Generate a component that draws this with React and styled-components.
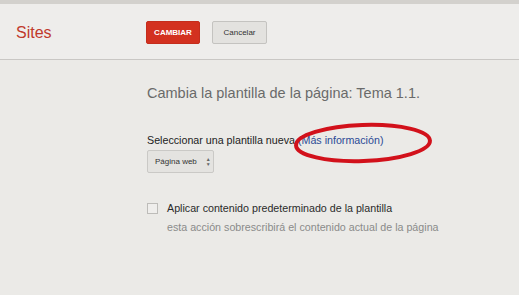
import React from "react";
import styled, { createGlobalStyle } from "styled-components";

const Global = createGlobalStyle`
  html, body {
    margin: 0;
    padding: 0;
    background: #ebeae7;
    font-family: "Liberation Sans", Arial, sans-serif;
  }
`;

const Page = styled.div`
  width: 519px;
  height: 295px;
  background: #ebeae7;
  overflow: hidden;
`;

const TopStrip = styled.div`
  height: 4px;
  background: #d3d1cd;
`;

const Header = styled.header`
  height: 55px;
  display: flex;
  align-items: center;
  background: #eeedeb;
  border-bottom: 1px solid #c9c7c4;
  padding-left: 16px;
`;

const Logo = styled.div`
  width: 130px;
  font-size: 16px;
  color: #c0392b;
  margin-top: 2px;
`;

const Button = styled.button`
  height: 23px;
  width: ${(p) => (p.$primary ? "54px" : "55px")};
  padding: 0;
  margin-right: 12px;
  margin-top: 2px;
  border-radius: 2px;
  font-family: "Liberation Sans", Arial, sans-serif;
  font-size: 8px;
  font-weight: ${(p) => (p.$primary ? "bold" : "normal")};
  color: ${(p) => (p.$primary ? "#fff" : "#333")};
  background: ${(p) => (p.$primary ? "#d3311f" : "#e3e2df")};
  border: 1px solid ${(p) => (p.$primary ? "#c42d1c" : "#c4c3c0")};
`;

const Main = styled.main`
  padding: 24px 0 0 147px;
`;

const Title = styled.h1`
  margin: 0;
  font-size: 14.5px;
  font-weight: normal;
  color: #6a6a6a;
  line-height: 18px;
`;

const Row = styled.div`
  position: relative;
  margin-top: 32px;
  font-size: 10.7px;
  color: #222;
  line-height: 13px;
`;

const Link = styled.a`
  color: #2b4a96;
  text-decoration: none;
`;

const Circle = styled.svg`
  position: absolute;
  left: 144px;
  top: -15px;
  pointer-events: none;
`;

const Select = styled.div`
  display: inline-flex;
  align-items: center;
  gap: 9px;
  margin-top: 3px;
  height: 23px;
  padding: 0 7px;
  box-sizing: border-box;
  width: 67px;
  white-space: nowrap;
  background: #e4e3e0;
  border: 1px solid #cac9c6;
  border-radius: 2px;
  font-size: 8px;
  color: #333;
`;

const Arrows = styled.span`
  display: inline-flex;
  flex-direction: column;
  gap: 1px;
  color: #666;
  font-size: 5px;
  line-height: 4px;
`;

const CheckRow = styled.div`
  display: flex;
  align-items: flex-start;
  gap: 9px;
  margin-top: 29px;
`;

const Box = styled.span`
  width: 9px;
  height: 9px;
  margin-top: 1px;
  border: 1px solid #bdbcb9;
  background: #efeeec;
  flex: none;
`;

const CheckText = styled.div`
  font-size: 10.7px;
  line-height: 13px;
  color: #2a2a2a;
`;

const Hint = styled.div`
  margin-top: 6px;
  color: #8a8a8a;
`;

export default function App() {
  return (
    <Page>
      <Global />
      <TopStrip />
      <Header>
        <Logo>Sites</Logo>
        <Button $primary>CAMBIAR</Button>
        <Button>Cancelar</Button>
      </Header>
      <Main>
        <Title>Cambia la plantilla de la página: Tema 1.1.</Title>
        <Row>
          Seleccionar una plantilla nueva <Link href="#">(Más información)</Link>
          <Circle width="146" height="48" viewBox="0 0 146 48">
            <ellipse
              cx="72"
              cy="24"
              rx="67"
              ry="18"
              fill="none"
              stroke="#d2111b"
              strokeWidth="4"
              transform="rotate(-2 72 24)"
            />
          </Circle>
        </Row>
        <Select>
          Página web
          <Arrows>
            <span>▲</span>
            <span>▼</span>
          </Arrows>
        </Select>
        <CheckRow>
          <Box />
          <CheckText>
            Aplicar contenido predeterminado de la plantilla
            <Hint>esta acción sobrescribirá el contenido actual de la página</Hint>
          </CheckText>
        </CheckRow>
      </Main>
    </Page>
  );
}
